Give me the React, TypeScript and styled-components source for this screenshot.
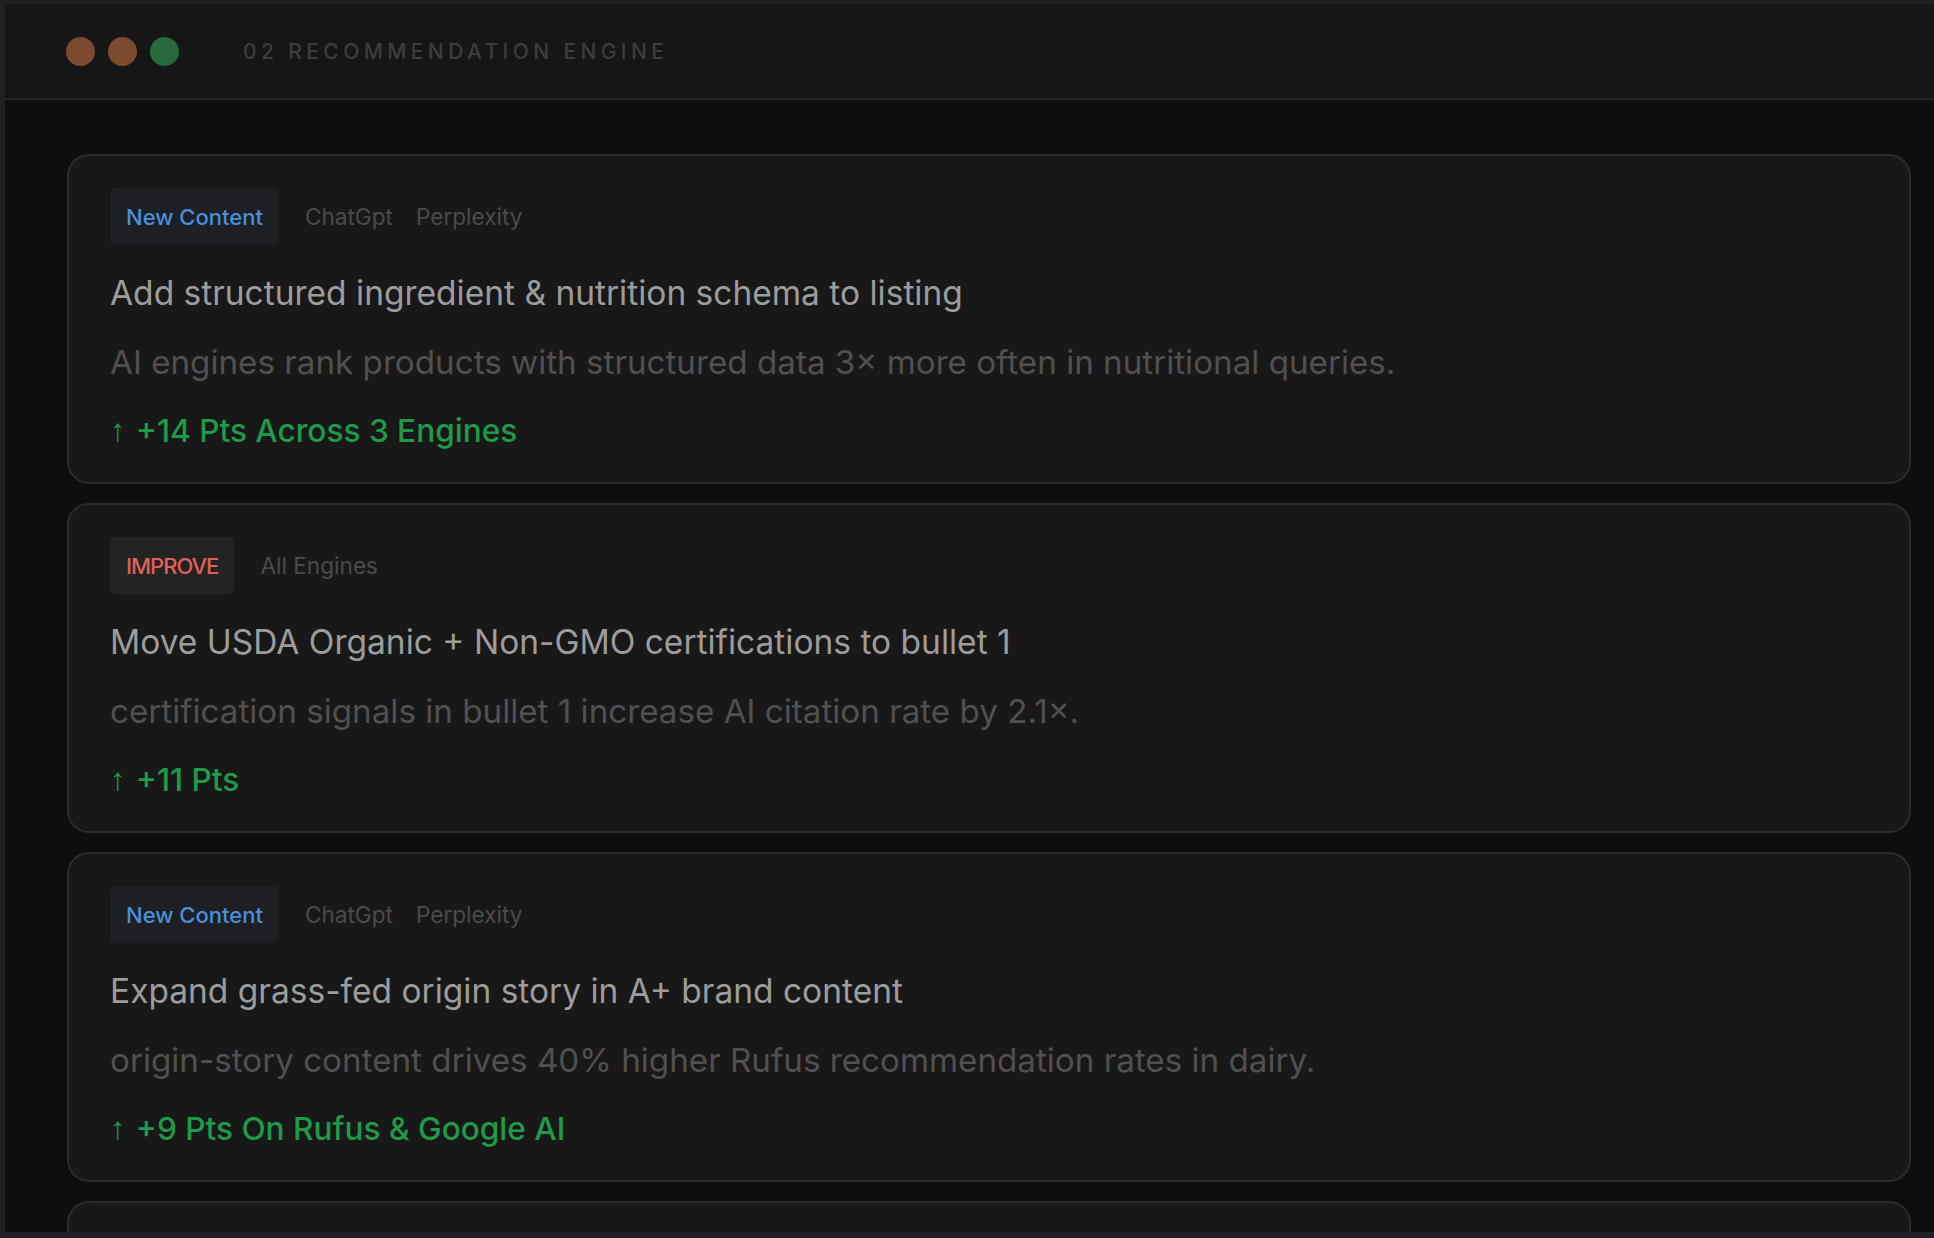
import React from "react";
import styled, { createGlobalStyle } from "styled-components";

const GlobalStyle = createGlobalStyle`
  html, body {
    margin: 0;
    padding: 0;
    background: #0e0e0e;
    overflow: hidden;
  }
  body {
    font-family: Inter, Roboto, "Liberation Sans", sans-serif;
  }
`;

type Kind = "new" | "improve";

type Recommendation = {
  kind: Kind;
  engines: string[];
  title: string;
  reason: string;
  impact: string;
};

const recommendations: Recommendation[] = [
  {
    kind: "new",
    engines: ["ChatGpt", "Perplexity"],
    title: "Add structured ingredient & nutrition schema to listing",
    reason:
      "AI engines rank products with structured data 3× more often in nutritional queries.",
    impact: "+14 Pts Across 3 Engines",
  },
  {
    kind: "improve",
    engines: ["All Engines"],
    title: "Move USDA Organic + Non-GMO certifications to bullet 1",
    reason: "certification signals in bullet 1 increase AI citation rate by 2.1×.",
    impact: "+11 Pts",
  },
  {
    kind: "new",
    engines: ["ChatGpt", "Perplexity"],
    title: "Expand grass-fed origin story in A+ brand content",
    reason:
      "origin-story content drives 40% higher Rufus recommendation rates in dairy.",
    impact: "+9 Pts On Rufus & Google AI",
  },
  {
    kind: "improve",
    engines: ["All Engines"],
    title: "Add comparison table against leading conventional brands",
    reason: "comparison content is cited in 62% of AI shopping answers.",
    impact: "+7 Pts",
  },
];

const App = () => {
  return (
    <>
      <GlobalStyle />
      <Frame>
        <TitleBar>
          <Lights>
            <Light color="#7b4a30" />
            <Light color="#7c4b2e" />
            <Light color="#276a3e" />
          </Lights>
          <WindowTitle>02 Recommendation Engine</WindowTitle>
        </TitleBar>
        <Content>
          {recommendations.map((rec, i) => (
            <Card key={i}>
              <TagRow>
                <KindBadge kind={rec.kind}>
                  {rec.kind === "new" ? "New Content" : "IMPROVE"}
                </KindBadge>
                <Engines>
                  {rec.engines.map((e) => (
                    <Engine key={e}>{e}</Engine>
                  ))}
                </Engines>
              </TagRow>
              <CardTitle>{rec.title}</CardTitle>
              <Reason>{rec.reason}</Reason>
              <Impact>
                <Arrow>↑</Arrow>
                {rec.impact}
              </Impact>
            </Card>
          ))}
        </Content>
      </Frame>
    </>
  );
};

export default App;

const Frame = styled.div`
  height: 1238px;
  box-sizing: border-box;
  border-top: 4px solid #1f2024;
  border-left: 5px solid #1f2024;
  border-bottom: 6px solid #1f2024;
  display: flex;
  flex-direction: column;
  overflow: hidden;
  background: #0e0e0e;
`;

const TitleBar = styled.header`
  flex: none;
  height: 94px;
  border-bottom: 2px solid #25262b;
  background: #161616;
  display: flex;
  align-items: center;
  padding-left: 61px;
  gap: 64px;
`;

const Lights = styled.div`
  display: flex;
  gap: 13px;
`;

const Light = styled.span<{ color: string }>`
  width: 29px;
  height: 29px;
  border-radius: 50%;
  background: ${(p) => p.color};
`;

const WindowTitle = styled.div`
  font-size: 21px;
  letter-spacing: 4.4px;
  text-transform: uppercase;
  color: #3d3d3d;
  font-weight: 500;
`;

const Content = styled.main`
  flex: 1;
  min-height: 0;
  padding: 54px 23px 0 62px;
  display: flex;
  flex-direction: column;
  gap: 19px;
`;

const Card = styled.section`
  flex: none;
  background: #181818;
  border: 2px solid #2c2c2c;
  border-radius: 22px;
  padding: 32px 40px 30px 41px;
  display: flex;
  flex-direction: column;
  align-items: flex-start;
  gap: 27px;
`;

const TagRow = styled.div`
  display: flex;
  align-items: center;
  gap: 26px;
`;

const KindBadge = styled.span<{ kind: Kind }>`
  height: 57px;
  display: inline-flex;
  align-items: center;
  padding: 0 16px;
  border-radius: 5px;
  font-size: 22px;
  font-weight: 500;
  letter-spacing: ${(p) => (p.kind === "improve" ? "-1px" : "0")};
  background: ${(p) => (p.kind === "new" ? "#1d1f24" : "#232323")};
  color: ${(p) => (p.kind === "new" ? "#4a8fdc" : "#e0605a")};
`;

const Engines = styled.div`
  display: flex;
  gap: 23px;
`;

const Engine = styled.span`
  font-size: 22.6px;
  color: #4a4a4a;
`;

const CardTitle = styled.h2`
  margin: 0;
  font-size: 33.5px;
  line-height: 42px;
  font-weight: 400;
  color: #9c9c9c;
`;

const Reason = styled.p`
  margin: 0;
  font-size: 33.2px;
  line-height: 42px;
  color: #505050;
`;

const Impact = styled.div`
  font-size: 31.6px;
  line-height: 42px;
  font-weight: 500;
  color: #1f9a48;
  display: flex;
  gap: 10px;
`;

const Arrow = styled.span`
  font-family: Roboto, "Liberation Sans", sans-serif;
  font-weight: 400;
`;
